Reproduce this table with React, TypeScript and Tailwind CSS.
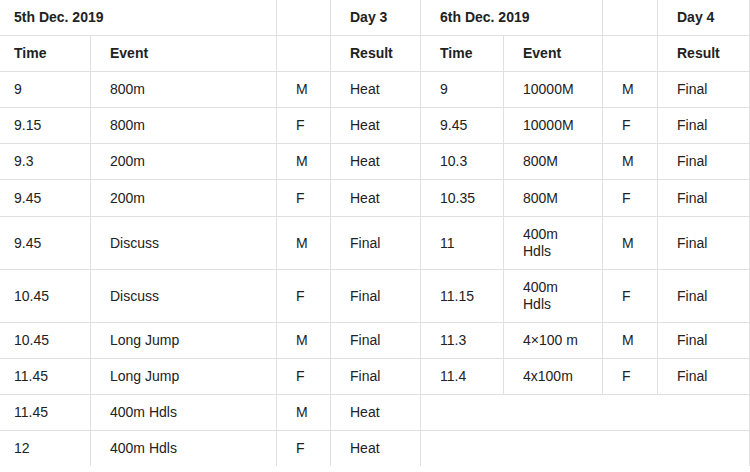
import React from "react";

type Cell = { t?: string; span?: number; bold?: boolean; last?: boolean };

function C({ t, span, bold, last }: Cell) {
  const spanCls =
    span === 2 ? "col-span-2" : span === 4 ? "col-span-4" : "";
  return (
    <div
      className={`border-r border-[#e0e0e0] ${last ? "" : "border-b"} ${spanCls} flex items-center px-[19px] leading-[17px] ${
        bold ? "font-bold" : ""
      }`}
    >
      {t}
    </div>
  );
}

const rows: Cell[][] = [
  [{ t: "5th Dec. 2019", span: 2, bold: true }, {}, { t: "Day 3", bold: true }, { t: "6th Dec. 2019", span: 2, bold: true }, {}, { t: "Day 4", bold: true }],
  [{ t: "Time", bold: true }, { t: "Event", bold: true }, {}, { t: "Result", bold: true }, { t: "Time", bold: true }, { t: "Event", bold: true }, {}, { t: "Result", bold: true }],
  [{ t: "9" }, { t: "800m" }, { t: "M" }, { t: "Heat" }, { t: "9" }, { t: "10000M" }, { t: "M" }, { t: "Final" }],
  [{ t: "9.15" }, { t: "800m" }, { t: "F" }, { t: "Heat" }, { t: "9.45" }, { t: "10000M" }, { t: "F" }, { t: "Final" }],
  [{ t: "9.3" }, { t: "200m" }, { t: "M" }, { t: "Heat" }, { t: "10.3" }, { t: "800M" }, { t: "M" }, { t: "Final" }],
  [{ t: "9.45" }, { t: "200m" }, { t: "F" }, { t: "Heat" }, { t: "10.35" }, { t: "800M" }, { t: "F" }, { t: "Final" }],
  [{ t: "9.45" }, { t: "Discuss" }, { t: "M" }, { t: "Final" }, { t: "11" }, { t: "400m Hdls" }, { t: "M" }, { t: "Final" }],
  [{ t: "10.45" }, { t: "Discuss" }, { t: "F" }, { t: "Final" }, { t: "11.15" }, { t: "400m Hdls" }, { t: "F" }, { t: "Final" }],
  [{ t: "10.45" }, { t: "Long Jump" }, { t: "M" }, { t: "Final" }, { t: "11.3" }, { t: "4×100 m" }, { t: "M" }, { t: "Final" }],
  [{ t: "11.45" }, { t: "Long Jump" }, { t: "F" }, { t: "Final" }, { t: "11.4" }, { t: "4x100m" }, { t: "F" }, { t: "Final" }],
  [{ t: "11.45" }, { t: "400m Hdls" }, { t: "M" }, { t: "Heat" }, { span: 4 }],
  [{ t: "12", last: true }, { t: "400m Hdls", last: true }, { t: "F", last: true }, { t: "Heat", last: true }, { span: 4, last: true }],
];

export default function App() {
  return (
    <div className="w-[750px] h-[472px] overflow-hidden bg-white">
      <div
        className="ml-[-5px] w-[755px] grid grid-cols-[96px_186px_54px_90px_83px_99px_55px_92px] grid-rows-[36px_36px_36px_36px_36px_37px_53px_53px_36px_36px_36px_35px] text-[14px] text-[#222]"
        style={{ fontFamily: '"Liberation Sans", Arial, sans-serif' }}
      >
        {rows.map((r, i) => (
          <React.Fragment key={i}>
            {r.map((c, j) => (
              <C key={j} {...c} />
            ))}
          </React.Fragment>
        ))}
      </div>
    </div>
  );
}
